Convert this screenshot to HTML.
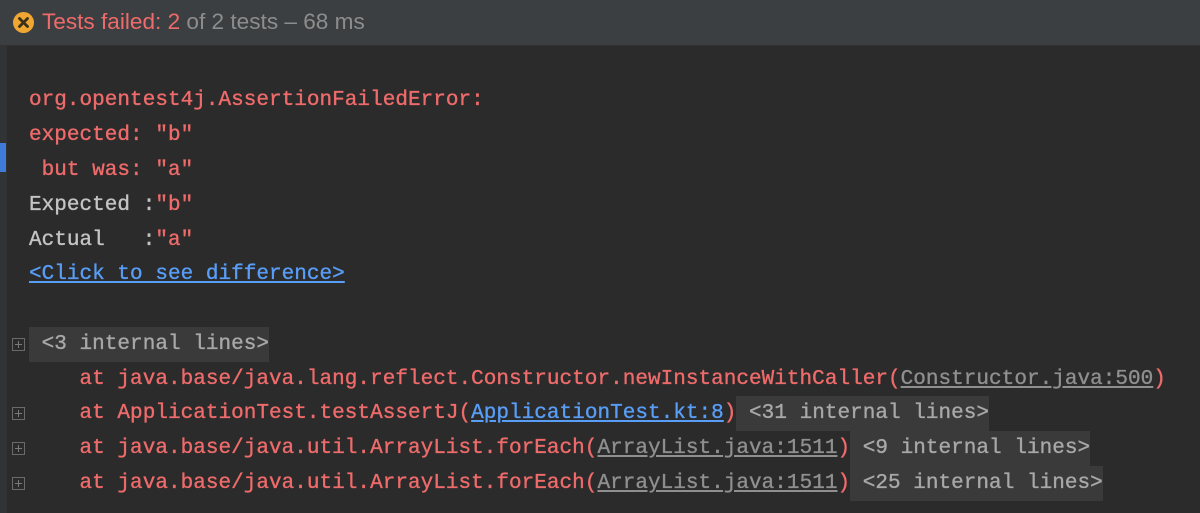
<!DOCTYPE html>
<html><head><style>
body{margin:0;width:1200px;height:513px;background:#2b2b2b;overflow:hidden;position:relative;font-family:"Liberation Mono",monospace}
.hdr{position:absolute;left:0;top:0;width:1200px;height:46px;background:#3c3f41;border-bottom:1px solid #323232;box-sizing:border-box}
.hdr .t{position:absolute;left:42px;top:9px;font:22.6px "Liberation Sans",sans-serif;color:#8d8d8d;white-space:pre}
.red{color:#ef6b6b}
.ic{position:absolute;left:13px;top:12px;width:21px;height:21px;border-radius:50%;background:#f0a732}
.gut{position:absolute;left:0;top:46px;width:7px;height:467px;background:#313335}
.bar{position:absolute;left:0;top:143px;width:6px;height:29px;background:#3f7bd9}
.ln{position:absolute;left:29px;height:35px;line-height:35px;font-size:21px;white-space:pre;color:#ef6b6b;-webkit-text-stroke:0.35px currentColor;letter-spacing:0.03px}
.w{color:#c4c4c4}
.bl{color:#589df6;text-decoration:underline}
.gl{color:#8f8f8f;text-decoration:underline}
.il{background:#3a3a3a;color:#a8a8a8;display:inline-block;height:35px;vertical-align:top}
.pb{position:absolute;left:12px;width:11px;height:11px;border:1px solid #6a6a6a}
.pb:before{content:"";position:absolute;left:2px;top:5px;width:7px;height:1px;background:#7a7a7a}
.pb:after{content:"";position:absolute;left:5px;top:2px;width:1px;height:7px;background:#7a7a7a}
</style></head><body>
<div class="hdr">
<div class="ic"><svg width="21" height="21" viewBox="0 0 21 21"><path d="M6.5 6.5L14.5 14.5M14.5 6.5L6.5 14.5" stroke="#3a2f1a" stroke-width="2.8" stroke-linecap="round"/></svg></div>
<div class="t"><span class="red">Tests failed: 2</span> of 2 tests – 68 ms</div>
</div>
<div class="gut"></div><div class="bar"></div>
<div class="ln" style="top:83px">org.opentest4j.AssertionFailedError:</div>
<div class="ln" style="top:118px">expected: "b"</div>
<div class="ln" style="top:153px"> but was: "a"</div>
<div class="ln" style="top:188px"><span class="w">Expected :</span>"b"</div>
<div class="ln" style="top:223px"><span class="w">Actual   :</span>"a"</div>
<div class="ln" style="top:257px"><span class="bl">&lt;Click to see difference&gt;</span></div>
<div class="pb" style="top:338px"></div>
<div class="ln" style="top:327px"><span class="il"> &lt;3 internal lines&gt;</span></div>
<div class="ln" style="top:362px">    at java.base/java.lang.reflect.Constructor.newInstanceWithCaller(<span class="gl">Constructor.java:500</span>)</div>
<div class="pb" style="top:407px"></div>
<div class="ln" style="top:396px">    at ApplicationTest.testAssertJ(<span class="bl">ApplicationTest.kt:8</span>)<span class="il"> &lt;31 internal lines&gt;</span></div>
<div class="pb" style="top:442px"></div>
<div class="ln" style="top:431px">    at java.base/java.util.ArrayList.forEach(<span class="gl">ArrayList.java:1511</span>)<span class="il"> &lt;9 internal lines&gt;</span></div>
<div class="pb" style="top:477px"></div>
<div class="ln" style="top:466px">    at java.base/java.util.ArrayList.forEach(<span class="gl">ArrayList.java:1511</span>)<span class="il"> &lt;25 internal lines&gt;</span></div>
</body></html>
